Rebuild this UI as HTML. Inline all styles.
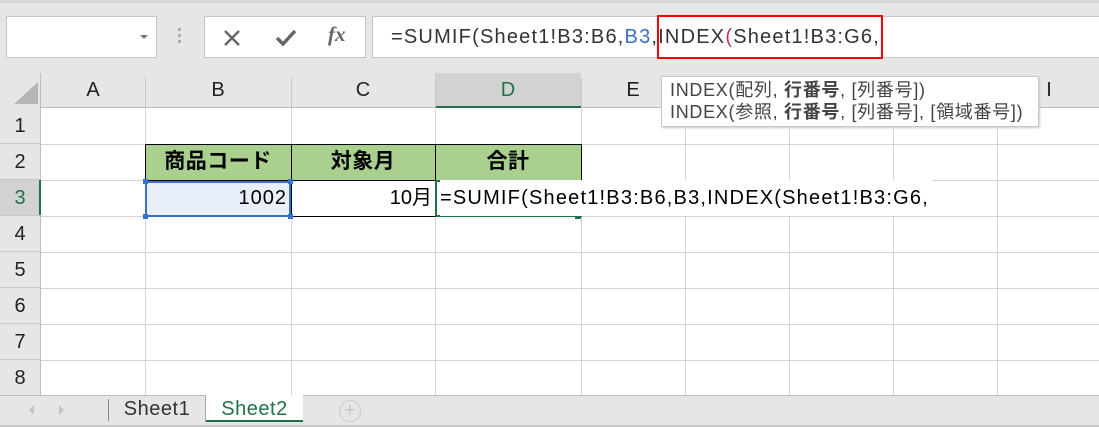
<!DOCTYPE html>
<html><head><meta charset="utf-8"><style>
*{margin:0;padding:0;box-sizing:border-box}
body{width:1099px;height:427px;overflow:hidden;background:#fff;position:relative;font-family:"Liberation Sans","Noto Sans CJK JP",sans-serif;color:#000}
.a{position:absolute}
.vl{position:absolute;top:108px;height:287px;width:1px;background:#d4d4d4}
.hl{position:absolute;left:41px;right:0;height:1px;background:#d4d4d4}
.ch{position:absolute;top:73px;height:35px;line-height:35px;text-align:center;font-size:20px;color:#222}
.rh{position:absolute;left:0;width:40px;text-align:center;font-size:20px;color:#222}
</style></head><body>
<div class="a" style="left:0;top:0;width:1099px;height:73px;background:#e6e6e6"></div>
<div class="a" style="left:0;top:0;width:1099px;height:3px;background:#d8d8d8"></div>
<div class="a" style="left:6px;top:16px;width:151px;height:42px;background:#fff;border:1px solid #c6c6c6"></div>
<div class="a" style="left:140px;top:35px;width:0;height:0;border-left:4px solid transparent;border-right:4px solid transparent;border-top:4px solid #777"></div>
<div class="a" style="left:178px;top:28px;width:3px;height:3px;background:#aaa;box-shadow:0 6px 0 #aaa,0 12px 0 #aaa"></div>
<div class="a" style="left:204px;top:16px;width:162px;height:42px;background:#fff;border:1px solid #c6c6c6"></div>
<svg class="a" style="left:222px;top:28px" width="20" height="20"><path d="M3 3L17 17M17 3L3 17" stroke="#666" stroke-width="2.4"/></svg>
<svg class="a" style="left:275px;top:28px" width="22" height="20"><path d="M2 10L8 16L20 3" stroke="#666" stroke-width="3.5" fill="none"/></svg>
<div class="a" style="left:328px;top:22px;font-family:'Liberation Serif',serif;font-style:italic;font-weight:bold;font-size:21px;color:#666">fx</div>
<div class="a" style="left:372px;top:16px;width:727px;height:42px;background:#fff;border:1px solid #c6c6c6;border-right:none"></div>
<div class="a" style="left:391px;top:22px;font-size:20px;line-height:30px;letter-spacing:1.2px;color:#333;white-space:nowrap">=SUMIF(Sheet1!B3:B6,<span style="color:#3a6fc4">B3</span>,INDEX<span style="color:#c0306a">(</span>Sheet1!B3:G6,</div>
<div class="a" style="left:657px;top:15px;width:226px;height:44px;border:2px solid #f00"></div>
<div class="a" style="left:0;top:73px;width:1099px;height:35px;background:#e6e6e6;border-bottom:1px solid #bdbdbd"></div>
<div class="a" style="left:0;top:73px;width:41px;height:322px;background:#e6e6e6;border-right:1px solid #bdbdbd"></div>
<svg class="a" style="left:10px;top:80px" width="30" height="26"><path d="M28 2L28 24L4 24Z" fill="#b5b5b5"/></svg>
<div class="a" style="left:435px;top:73px;width:146px;height:35px;background:#d2d2d2;border-bottom:2px solid #217346"></div>
<div class="a" style="left:0;top:180px;width:41px;height:36px;background:#d2d2d2;border-right:2px solid #217346"></div>
<div class="ch" style="left:41px;width:104px">A</div>
<div class="ch" style="left:145px;width:146px">B</div>
<div class="ch" style="left:291px;width:144px">C</div>
<div class="ch" style="left:435px;width:146px;color:#217346">D</div>
<div class="ch" style="left:581px;width:104px">E</div>
<div class="ch" style="left:997px;width:104px">I</div>
<div class="a" style="left:145px;top:78px;width:1px;height:30px;background:#c8c8c8;box-shadow:146px 0 0 #c8c8c8,290px 0 0 #c8c8c8,436px 0 0 #c8c8c8,540px 0 0 #c8c8c8,644px 0 0 #c8c8c8,748px 0 0 #c8c8c8,852px 0 0 #c8c8c8"></div>
<div class="rh" style="top:108px;line-height:36px">1</div>
<div class="rh" style="top:144px;line-height:36px">2</div>
<div class="rh" style="top:180px;line-height:36px;color:#217346">3</div>
<div class="rh" style="top:216px;line-height:36px">4</div>
<div class="rh" style="top:252px;line-height:36px">5</div>
<div class="rh" style="top:288px;line-height:36px">6</div>
<div class="rh" style="top:324px;line-height:36px">7</div>
<div class="rh" style="top:360px;line-height:36px">8</div>
<div class="a" style="left:0;top:143px;width:41px;height:1px;background:#c8c8c8;box-shadow:0 36px 0 #c8c8c8,0 72px 0 #c8c8c8,0 108px 0 #c8c8c8,0 144px 0 #c8c8c8,0 180px 0 #c8c8c8,0 216px 0 #c8c8c8"></div>
<div class="vl" style="left:145px"></div><div class="vl" style="left:291px"></div><div class="vl" style="left:435px"></div><div class="vl" style="left:581px"></div><div class="vl" style="left:685px"></div><div class="vl" style="left:789px"></div><div class="vl" style="left:893px"></div><div class="vl" style="left:997px"></div>
<div class="hl" style="top:144px"></div><div class="hl" style="top:180px"></div><div class="hl" style="top:216px"></div><div class="hl" style="top:252px"></div><div class="hl" style="top:288px"></div><div class="hl" style="top:324px"></div><div class="hl" style="top:360px"></div>
<div class="a" style="left:145px;top:144px;width:437px;height:37px;background:#a9d08e;border:1px solid #000"></div>
<div class="a" style="left:291px;top:144px;width:1px;height:73px;background:#000"></div>
<div class="a" style="left:435px;top:144px;width:1px;height:37px;background:#000"></div>
<div class="a" style="left:291px;top:216px;width:145px;height:1px;background:#000"></div>
<div class="a" style="left:145px;top:144px;width:146px;line-height:36px;text-align:center;font-size:21px;letter-spacing:0.5px;font-weight:bold">商品コード</div>
<div class="a" style="left:291px;top:144px;width:144px;line-height:36px;text-align:center;font-size:21px;letter-spacing:0.5px;font-weight:bold">対象月</div>
<div class="a" style="left:435px;top:144px;width:146px;line-height:36px;text-align:center;font-size:21px;letter-spacing:0.5px;font-weight:bold">合計</div>
<div class="a" style="left:145px;top:181px;width:146px;height:36px;background:#e8eff9;border:2px solid #3571d0"></div>
<div class="a" style="left:143px;top:179px;width:5px;height:5px;background:#3571d0;box-shadow:145px 0 0 #3571d0,0 35px 0 #3571d0,145px 35px 0 #3571d0"></div>
<div class="a" style="left:145px;top:180px;width:142px;line-height:36px;text-align:right;font-size:20px;letter-spacing:1px">1002</div>
<div class="a" style="left:291px;top:180px;width:141px;line-height:36px;text-align:right;font-size:20px">10月</div>
<div class="a" style="left:435px;top:180px;width:147px;height:37px;border:2px solid #217346;border-right:none"></div>
<div class="a" style="left:575px;top:214px;width:6px;height:5px;background:#217346"></div>
<div class="a" style="left:440px;top:180px;line-height:36px;font-size:20px;letter-spacing:1.2px;white-space:nowrap;background:#fff;padding-right:4px">=SUMIF(Sheet1!B3:B6,B3,INDEX(Sheet1!B3:G6,</div>
<div class="a" style="left:661px;top:76px;width:378px;height:51px;background:#fff;border:1px solid #c8c8c8;box-shadow:1px 1px 2px #ccc;font-size:18px;letter-spacing:0.7px;line-height:22px;color:#444;padding:2px 0 0 8px;white-space:nowrap">INDEX(配列, <b>行番号</b>, [列番号])<br>INDEX(参照, <b>行番号</b>, [列番号], [領域番号])</div>
<div class="a" style="left:0;top:395px;width:1099px;height:32px;background:#e6e6e6;border-top:1px solid #bdbdbd;border-bottom:2px solid #c8c8c8"></div>
<svg class="a" style="left:25px;top:402px" width="45" height="16"><path d="M9 3L4 8L9 13Z" fill="#c4c4c4"/><path d="M34 3L39 8L34 13Z" fill="#c4c4c4"/></svg>
<div class="a" style="left:108px;top:399px;width:1px;height:22px;background:#888"></div>
<div class="a" style="left:109px;top:395px;width:97px;height:27px;text-align:center;font-size:20px;letter-spacing:0.5px;line-height:28px;color:#333;border-right:1px solid #aaa">Sheet1</div>
<div class="a" style="left:206px;top:395px;width:97px;height:27px;background:#fff;border-bottom:2px solid #217346;text-align:center;font-size:20px;letter-spacing:0.5px;line-height:28px;color:#217346">Sheet2</div>
<div class="a" style="left:339px;top:400px;width:22px;height:22px;border:1.5px solid #c8c8c8;border-radius:50%;text-align:center;line-height:19px;font-size:19px;color:#c4c4c4">+</div>
</body></html>
